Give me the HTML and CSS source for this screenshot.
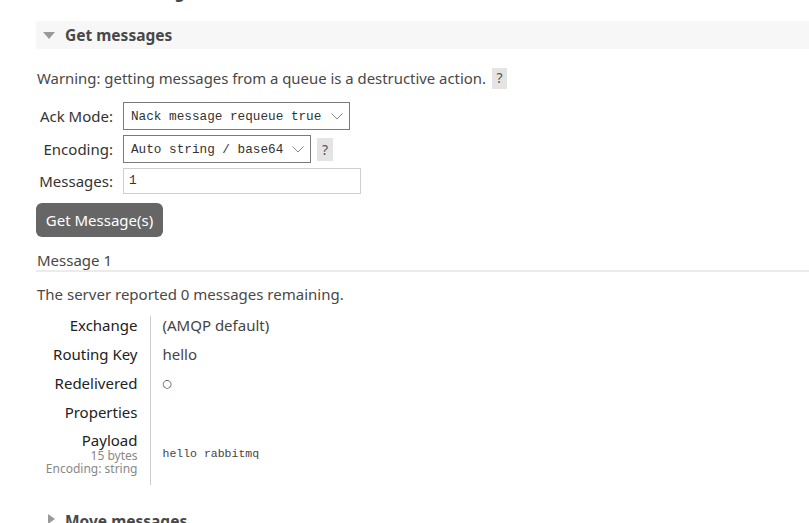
FILE: index.html
```html
<!DOCTYPE html>
<html>
<head>
<meta charset="utf-8">
<link rel="stylesheet" href="styles.css">
</head>
<body>
<div class="page">
  <h2 class="sec-h prev">Publish message</h2>

  <div class="section">
    <h2 class="sec-h open"><span class="tri-down"></span>Get messages</h2>
    <div class="sec-body">
      <p class="warn">Warning: getting messages from a queue is a destructive action. <span class="help">?</span></p>

      <div class="form">
        <label class="f-label">Ack Mode:</label>
        <div class="f-field">
          <div class="select sel-ack"><span>Nack message requeue true</span>
            <svg class="chev" width="12" height="7" viewBox="0 0 12 7"><path d="M0.5 0.5 L6 6 L11.5 0.5" fill="none" stroke="#8a8a8a" stroke-width="1"/></svg>
          </div>
        </div>

        <label class="f-label">Encoding:</label>
        <div class="f-field">
          <div class="select sel-enc"><span>Auto string / base64</span>
            <svg class="chev" width="12" height="7" viewBox="0 0 12 7"><path d="M0.5 0.5 L6 6 L11.5 0.5" fill="none" stroke="#8a8a8a" stroke-width="1"/></svg>
          </div>
          <span class="help help-sm">?</span>
        </div>

        <label class="f-label">Messages:</label>
        <div class="f-field">
          <div class="input">1</div>
        </div>
      </div>

      <button class="btn">Get Message(s)</button>

      <div class="msg-title">Message 1</div>
      <p class="remaining">The server reported 0 messages remaining.</p>

      <table class="props">
        <tr><th>Exchange</th><td>(AMQP default)</td></tr>
        <tr><th>Routing Key</th><td>hello</td></tr>
        <tr><th>Redelivered</th><td class="mono-sm">○</td></tr>
        <tr><th>Properties</th><td></td></tr>
        <tr class="payload">
          <th><span class="p-main">Payload</span><span class="p-sub">15 bytes</span><span class="p-sub">Encoding: string</span></th>
          <td class="mono">hello rabbitmq</td>
        </tr>
      </table>
    </div>
  </div>

  <h2 class="sec-h next"><span class="tri-right"></span>Move messages</h2>
</div>
</body>
</html>
```

FILE: styles.css
```css
* { box-sizing: border-box; }
html, body { margin: 0; padding: 0; background: #fff; }
body {
  font-family: "Noto Sans", "DejaVu Sans", sans-serif;
  font-size: 15px;
  color: #484848;
  overflow: hidden;
  height: 523px;
}
.page { padding-left: 36px; }

.sec-h {
  margin: 0;
  height: 28px;
  line-height: 28px;
  font-size: 15.5px;
  font-weight: bold;
  color: #484848;
  padding-left: 29px;
  display: flex;
  align-items: center;
  position: relative;
}
.sec-h.prev { margin-top: -22px; }
.sec-h.open { margin-top: 15px; background: #f7f7f7; }
.sec-h.next { margin-top: 22px; }

.tri-down {
  position: absolute;
  left: 7px;
  top: 11px;
  width: 0; height: 0;
  border-left: 6px solid transparent;
  border-right: 6px solid transparent;
  border-top: 7px solid #9a9a9a;
}
.tri-right {
  position: absolute;
  left: 12px;
  top: 7px;
  width: 0; height: 0;
  border-top: 5px solid transparent;
  border-bottom: 5px solid transparent;
  border-left: 7px solid #9a9a9a;
}

.sec-body { padding-left: 1px; }

.warn {
  margin: 18px 0 0 0;
  font-size: 14.9px;
  line-height: 22px;
  display: flex;
  align-items: center;
  gap: 6px;
}
.help {
  display: inline-flex;
  align-items: center;
  justify-content: center;
  width: 15px;
  height: 21px;
  background: #e4e4e4;
  color: #555;
  font-size: 14px;
}

.form {
  margin-top: 13px;
  display: grid;
  grid-template-columns: 76px auto;
  column-gap: 10px;
  row-gap: 5px;
  align-items: center;
}
.f-label { text-align: right; color: #333; }
.f-field { display: flex; align-items: center; gap: 6px; }

.select {
  display: flex;
  align-items: center;
  justify-content: space-between;
  border: 1px solid #7a7a7a;
  background: #fff;
  font-family: "Liberation Mono", "DejaVu Sans Mono", monospace;
  font-size: 12.7px;
  color: #333;
  padding: 0 6px 0 7px;
}
.sel-ack { width: 227px; height: 28px; }
.sel-enc { width: 188px; height: 28px; }
.chev { flex: none; }
.help-sm { height: 23px; width: 16px; }

.input {
  width: 238px;
  height: 26px;
  border: 1px solid #cfcfcf;
  font-family: "Liberation Mono", "DejaVu Sans Mono", monospace;
  font-size: 12.7px;
  color: #333;
  padding: 3px 5px;
  line-height: 18px;
}

.btn {
  display: block;
  margin: 9px 0 0 -1px;
  width: 127px;
  height: 34px;
  border: none;
  border-radius: 6px;
  background: #666;
  color: #fff;
  font-family: inherit;
  font-size: 15px;
  padding: 0;
}

.msg-title {
  margin-top: 14px;
  margin-left: -1px;
  padding-left: 1px;
  line-height: 18px;
  padding-bottom: 1px;
  border-bottom: 2px solid #ebebeb;
  color: #484848;
}

.remaining { margin: 11px 0 0 0; line-height: 22px; }

.props {
  margin-top: 11px;
  margin-left: -1px;
  border-collapse: collapse;
}
.props th {
  width: 114px;
  text-align: right;
  font-weight: normal;
  color: #222;
  padding: 0 12px 11px 0;
  line-height: 18px;
  border-right: 1px solid #cccccc;
  vertical-align: top;
}
.props td {
  padding: 0 0 11px 12px;
  line-height: 18px;
  vertical-align: top;
  color: #444;
}
.p-main { display: block; line-height: 17px; }
.p-sub {
  display: block;
  font-size: 12px;
  color: #888;
  line-height: 13px;
}
.props .payload th { padding-bottom: 10px; }
.props .payload td { padding-top: 15px; line-height: 14px; }
.mono { font-family: "Liberation Mono", "DejaVu Sans Mono", monospace; font-size: 11.5px; }
.mono-sm { font-size: 11px; }
```
